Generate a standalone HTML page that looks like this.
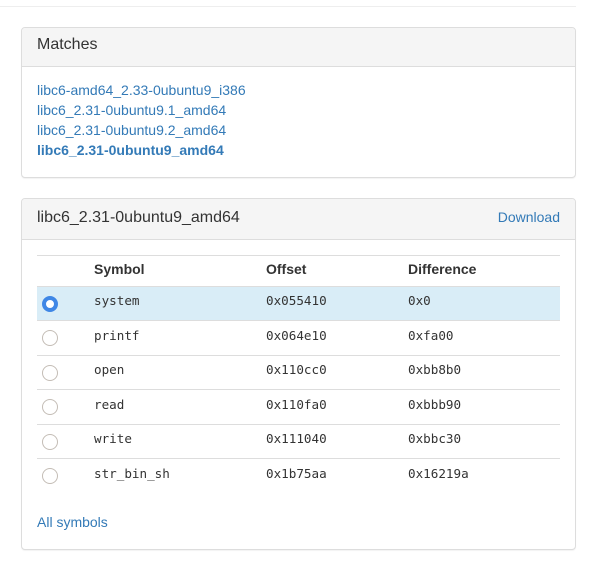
<!DOCTYPE html>
<html><head><meta charset="utf-8">
<style>
html,body{margin:0;padding:0;background:#fff;width:608px;height:588px;overflow:hidden}
body{font:14px/20px "Liberation Sans",sans-serif;color:#333;position:relative}
a{color:#337ab7;text-decoration:none}
.hr{position:absolute;left:0;top:6px;width:576px;height:1px;background:#eee}
.panel{position:absolute;left:21px;width:553px;border:1px solid #ddd;border-radius:4px;box-shadow:0 1px 1px rgba(0,0,0,.05);background:#fff}
.h{background:#f5f5f5;border-bottom:1px solid #ddd;padding:10px 15px;height:18px;font-size:16px;line-height:14px;border-radius:3px 3px 0 0;position:relative}
.h a{position:absolute;right:15px;top:8px;font-size:14px;line-height:20px}
.m{position:absolute;left:15px}
.l{position:absolute;left:37px;width:523px;height:1px;background:#ddd}
.t{position:absolute;white-space:pre}
.th{font-weight:bold;top:259px}
.c{font:12.6px/20px "DejaVu Sans Mono",monospace}
.radio{position:absolute;left:42px;width:14px;height:14px;border:1px solid #c4bdb6;border-radius:50%;background:#fff}
.on{border:4px solid #3f87e6;width:8px;height:8px}
</style></head><body>
<div class="hr"></div>
<div class="panel" style="top:27px;height:149px">
<div class="h">Matches</div>
<div class="m" style="top:52px"><a href="#">libc6-amd64_2.33-0ubuntu9_i386</a><br><a href="#">libc6_2.31-0ubuntu9.1_amd64</a><br><a href="#">libc6_2.31-0ubuntu9.2_amd64</a><br><a href="#"><b>libc6_2.31-0ubuntu9_amd64</b></a></div>
</div>
<div class="panel" style="top:198px;height:350px">
<div class="h" style="height:20px;line-height:18px">libc6_2.31-0ubuntu9_amd64<a href="#">Download</a></div>
<a class="m" style="top:313px" href="#">All symbols</a>
</div>

<div class="l" style="top:255px"></div>
<div class="t th" style="left:94px">Symbol</div>
<div class="t th" style="left:266px">Offset</div>
<div class="t th" style="left:408px">Difference</div>
<div style="position:absolute;left:37px;top:287px;width:523px;height:33px;background:#d9edf7"></div>
<div class="l" style="top:286px;height:1px"></div>
<div class="l" style="top:320px"></div>
<div class="l" style="top:355px"></div>
<div class="l" style="top:389px"></div>
<div class="l" style="top:424px"></div>
<div class="l" style="top:458px"></div>

<span class="radio on" style="top:296px"></span>
<span class="radio" style="top:330px"></span>
<span class="radio" style="top:365px"></span>
<span class="radio" style="top:399px"></span>
<span class="radio" style="top:434px"></span>
<span class="radio" style="top:468px"></span>

<div class="t c" style="left:94px;top:291px">system</div><div class="t c" style="left:266px;top:291px">0x055410</div><div class="t c" style="left:408px;top:291px">0x0</div>
<div class="t c" style="left:94px;top:326px">printf</div><div class="t c" style="left:266px;top:326px">0x064e10</div><div class="t c" style="left:408px;top:326px">0xfa00</div>
<div class="t c" style="left:94px;top:360px">open</div><div class="t c" style="left:266px;top:360px">0x110cc0</div><div class="t c" style="left:408px;top:360px">0xbb8b0</div>
<div class="t c" style="left:94px;top:395px">read</div><div class="t c" style="left:266px;top:395px">0x110fa0</div><div class="t c" style="left:408px;top:395px">0xbbb90</div>
<div class="t c" style="left:94px;top:429px">write</div><div class="t c" style="left:266px;top:429px">0x111040</div><div class="t c" style="left:408px;top:429px">0xbbc30</div>
<div class="t c" style="left:94px;top:464px">str_bin_sh</div><div class="t c" style="left:266px;top:464px">0x1b75aa</div><div class="t c" style="left:408px;top:464px">0x16219a</div>
</body></html>
